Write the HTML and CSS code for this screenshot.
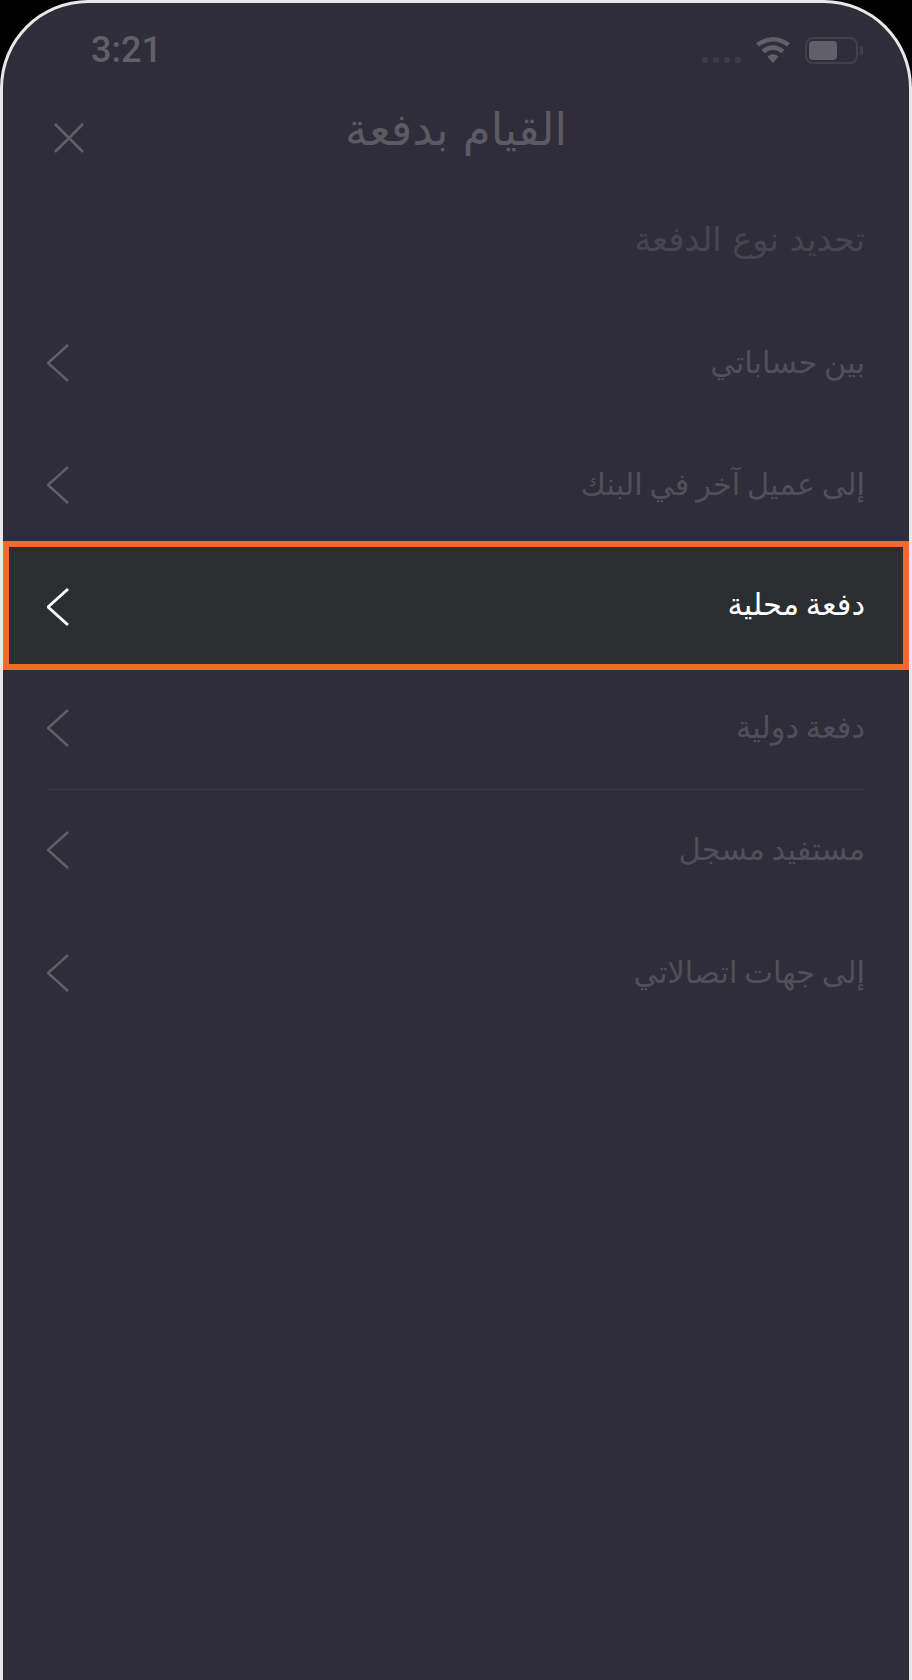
FILE: index.html
```html
<!DOCTYPE html>
<html lang="ar" dir="rtl">
<head>
    <meta charset="UTF-8">
    <meta name="viewport" content="width=device-width, initial-scale=1.0">
    <title>القيام بدفعة</title>
    <link rel="stylesheet" href="styles.css">
</head>
<body>
    <div class="phone">
        <div class="status-bar" dir="ltr">
            <span class="time">3:21</span>
            <div class="status-icons">
                <div class="signal"><i></i><i></i><i></i><i></i></div>
                <svg class="wifi" viewBox="0 0 34 26">
                    <path d="M17 26 L11.5 19.5 Q17 15 22.5 19.5 Z" />
                    <path d="M8.6 16.2 L5.6 12.8 Q17 3.8 28.4 12.8 L25.4 16.2 Q17 9.8 8.6 16.2 Z" />
                    <path d="M3 9.6 L0 6.2 Q17 -6.2 34 6.2 L31 9.6 Q17 -0.6 3 9.6 Z" />
                </svg>
                <div class="battery"><div class="battery-level"></div></div>
                <div class="battery-cap"></div>
            </div>
        </div>

        <header class="top-bar">
            <h1>القيام بدفعة</h1>
            <svg class="close" viewBox="0 0 32 32">
                <path d="M2 2 L30 30 M30 2 L2 30" />
            </svg>
        </header>

        <h2 class="section-title">تحديد نوع الدفعة</h2>

        <ul class="options">
            <li class="option">
                <span>بين حساباتي</span>
                <svg class="chevron" viewBox="0 0 22 40"><path d="M21 2 L1 20 L21 38" /></svg>
            </li>
            <li class="option">
                <span>إلى عميل آخر في البنك</span>
                <svg class="chevron" viewBox="0 0 22 40"><path d="M21 2 L1 20 L21 38" /></svg>
            </li>
            <li class="option selected">
                <span>دفعة محلية</span>
                <svg class="chevron" viewBox="0 0 22 40"><path d="M21 2 L1 20 L21 38" /></svg>
            </li>
            <li class="option strong-line">
                <span>دفعة دولية</span>
                <svg class="chevron" viewBox="0 0 22 40"><path d="M21 2 L1 20 L21 38" /></svg>
            </li>
            <li class="option">
                <span>مستفيد مسجل</span>
                <svg class="chevron" viewBox="0 0 22 40"><path d="M21 2 L1 20 L21 38" /></svg>
            </li>
            <li class="option">
                <span>إلى جهات اتصالاتي</span>
                <svg class="chevron" viewBox="0 0 22 40"><path d="M21 2 L1 20 L21 38" /></svg>
            </li>
        </ul>
    </div>
</body>
</html>
```

FILE: styles.css
```css
html, body {
    margin: 0;
    padding: 0;
    background-color: #000;
}
body {
    font-family: 'DejaVu Sans', sans-serif;
    width: 912px;
    height: 1680px;
    overflow: hidden;
}
.phone {
    box-sizing: border-box;
    width: 912px;
    height: 1680px;
    background-color: #2e2d39;
    border: 3px solid #e8e8ea;
    border-bottom: none;
    border-radius: 88px 88px 0 0;
}
.status-bar {
    display: flex;
    justify-content: space-between;
    align-items: center;
    height: 62px;
    padding: 16px 46px 0 88px;
}
.time {
    font-family: 'Roboto', sans-serif;
    font-weight: 500;
    font-size: 36px;
    line-height: 1;
    color: #605f6a;
}
.status-icons {
    display: flex;
    align-items: center;
}
.signal {
    display: flex;
    gap: 5px;
    align-self: flex-end;
    margin: 0 15px 1px 0;
}
.signal i {
    display: block;
    width: 6px;
    height: 6px;
    border-radius: 2px;
    background-color: #3b3a46;
}
.wifi {
    width: 34px;
    height: 26px;
    fill: #605f6a;
    margin-right: 15px;
}
.battery {
    box-sizing: border-box;
    width: 53px;
    height: 27px;
    padding: 2px;
    border: 2px solid #403f4b;
    border-radius: 8px;
}
.battery-level {
    width: 28px;
    height: 100%;
    background-color: #605f6a;
    border-radius: 4px;
}
.battery-cap {
    width: 3px;
    height: 9px;
    margin-left: 2px;
    background-color: #403f4b;
    border-radius: 0 2px 2px 0;
}
.top-bar {
    display: flex;
    justify-content: center;
    align-items: center;
    position: relative;
    height: 100px;
}
.top-bar h1 {
    margin: 0 0 4px;
    font-size: 45px;
    font-weight: normal;
    color: #5b5a65;
}
.close {
    position: absolute;
    left: 50px;
    top: 41px;
    width: 32px;
    height: 32px;
    fill: none;
    stroke: #5f5e69;
    stroke-width: 2.6;
}
.section-title {
    margin: 0;
    padding: 0 44px 0 0;
    height: 121px;
    line-height: 118px;
    box-sizing: border-box;
    font-size: 33.5px;
    font-weight: normal;
    color: #464551;
}
.options {
    list-style: none;
    margin: 0;
    padding: 0;
}
.option {
    display: flex;
    justify-content: space-between;
    align-items: center;
    height: 122px;
    margin: 0 44px;
    box-sizing: border-box;
    border-top: 1px solid #31303c;
    font-size: 30.5px;
    word-spacing: -3px;
    color: #504f5b;
}
.option span {
    margin-bottom: 3px;
}
.option.strong-line {
    border-bottom: 1px solid #393844;
}
.option.strong-line + .option {
    border-top: none;
}
.option.selected {
    position: relative;
    height: 129px;
    margin: -5px 0 -2px;
    padding: 0 38px;
    background-color: #2b2d31;
    border: 6px solid #f26a2e;
    color: #fff;
}
.chevron {
    width: 22px;
    height: 40px;
    margin-bottom: 2px;
    fill: none;
    stroke: #5f5e69;
    stroke-width: 2.6;
}
.selected .chevron {
    stroke: #fff;
    stroke-width: 3;
    margin-bottom: 0;
    margin-top: 3px;
}
```
